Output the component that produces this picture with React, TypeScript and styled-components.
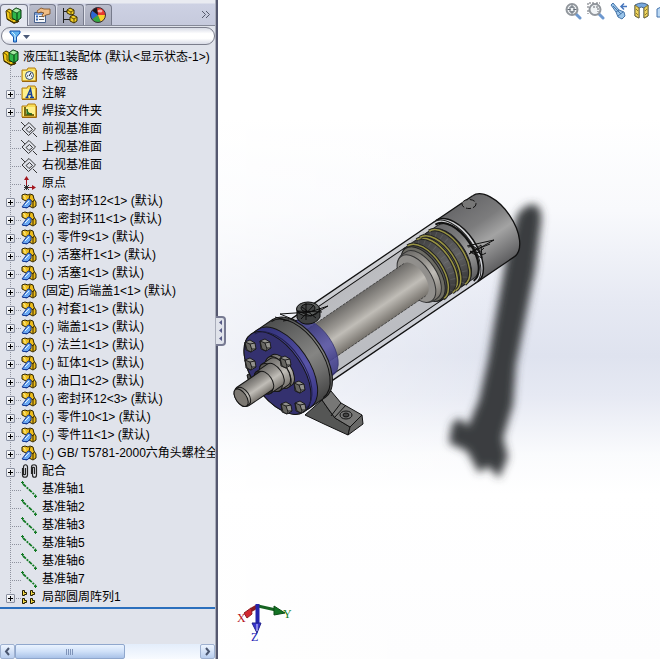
import React from 'react';
import styled, { createGlobalStyle } from 'styled-components';

const GlobalStyle = createGlobalStyle`
  * { box-sizing: border-box; }
  body { margin: 0; overflow: hidden; }
  button { font: inherit; padding: 0; border: 0; background: none; display: block; }
  svg { display: block; flex: none; }
`;

const Window = styled.div`
  display: flex;
  height: 100vh;
  background: #fff;
  color: #000;
  font: 12px/18px "Liberation Sans", "Noto Sans CJK SC", sans-serif;
`;

const Panel = styled.aside`
  position: relative;
  flex: 0 0 218px;
  min-width: 0;
  display: flex;
  flex-direction: column;
  background: #e0e3eb;
  border-right: 2px solid #55586f;
`;

const PanelBody = styled.div`
  flex: 1;
  min-width: 0;
  min-height: 0;
  display: flex;
  flex-direction: column;
  border-right: 1px solid #a9adba;
`;

const TabBar = styled.div`
  display: flex;
  align-items: stretch;
  height: 26px;
  padding: 4px 4px 0 0;
  flex: none;
  background: linear-gradient(#e9ebf1 0 3px, #cdd1e3 4px, #c6cadd);
  border-bottom: 1px solid #858998;
`;

const Tab = styled.button<{ $active?: boolean }>`
  width: 28px;
  height: ${p => (p.$active ? 22 : 21)}px;
  display: flex;
  align-items: center;
  justify-content: center;
  border: 1px solid #777b8c;
  border-left-color: ${p => (p.$active ? '#777b8c' : '#e2e4ee')};
  border-bottom: 0;
  border-radius: 4px 4px 0 0;
  background: ${p => (p.$active ? '#e3e6ef' : 'linear-gradient(#b9bccb, #a6aabb)')};
`;

const MoreTabs = styled.button`
  margin-left: auto;
  width: 10px;
`;

const FilterBar = styled.label`
  display: flex;
  align-items: center;
  height: 18px;
  margin: 1px 0 0 1px;
  padding-left: 7px;
  gap: 3px;
  flex: none;
  border: 1px solid #7b7e8c;
  border-radius: 9px;
  background: linear-gradient(#d8dbe6, #fff 35%, #fff 65%, #d9dce7);
`;

const FilterInput = styled.input`
  flex: 1;
  min-width: 0;
  height: 14px;
  border: 0;
  outline: 0;
  background: transparent;
  font: inherit;
`;

const Tree = styled.ul`
  list-style: none;
  margin: 0;
  padding: 3px 0 1px;
  flex: none;
  overflow: hidden;
  border-bottom: 2px solid #2b6fbd;
`;

const Row = styled.li<{ $root?: boolean }>`
  display: flex;
  align-items: center;
  height: 18px;
  padding-left: ${p => (p.$root ? 2 : 0)}px;
  gap: ${p => (p.$root ? 3 : 0)}px;
  white-space: pre;
`;

const Branch = styled.span<{ $last?: boolean }>`
  flex: none;
  width: 21px;
  height: 18px;
  display: flex;
  align-items: center;
  padding-left: 6px;
  background:
    repeating-linear-gradient(180deg, #8e929e 0 1px, transparent 1px 2px) 10px 0 / 1px ${p => (p.$last ? 10 : 18)}px no-repeat,
    repeating-linear-gradient(90deg, #8e929e 0 1px, transparent 1px 2px) 12px 10px / 9px 1px no-repeat;
`;

const Expander = styled.button`
  width: 9px;
  height: 9px;
  margin-top: 2px;
  border: 1px solid #8a90a0;
  border-radius: 1px;
  background:
    linear-gradient(#000, #000) 1px 3px / 5px 1px no-repeat,
    linear-gradient(#000, #000) 3px 1px / 1px 5px no-repeat,
    linear-gradient(135deg, #fff, #d6d9e0);
`;

const Label = styled.span`
  margin-left: 4px;
`;

const RootLabel = styled.span``;

const ScrollBar = styled.div`
  display: flex;
  height: 15px;
  margin-top: auto;
  flex: none;
  background: linear-gradient(#e3edfb, #f8fbff);
`;

const ScrollButton = styled.button`
  width: 15px;
  display: flex;
  align-items: center;
  justify-content: center;
  border: 1px solid #9fb1d0;
  border-radius: 2px;
  background: linear-gradient(#eef5ff, #b8cdee);
`;

const ScrollThumb = styled.div`
  width: 110px;
  margin-right: auto;
  border: 1px solid #8fa7cd;
  border-radius: 2px;
  background:
    repeating-linear-gradient(90deg, #7f93b8 0 1px, transparent 1px 2px) center / 8px 6px no-repeat,
    linear-gradient(#eaf3ff, #cfe0f8 50%, #a9c2e8);
`;

const Splitter = styled.button`
  position: absolute;
  z-index: 1;
  right: -10px;
  top: 316px;
  width: 10px;
  height: 30px;
  border: 2px solid #777a92;
  border-left: 0;
  border-radius: 0 4px 4px 0;
  background: #e0e3eb;
`;

const Viewport = styled.main`
  position: relative;
  flex: 1;
  min-width: 0;
  overflow: hidden;
  background:
    linear-gradient(90deg, rgba(255,255,255,.55), rgba(255,255,255,0) 70%),
    linear-gradient(#fff 18%, #f8f9fc 32%, #e6e9f3 46%, #dfe3ef 54%, #e6e9f3 60%, #fafbfd 69%, #fff 75%, #fdfdfe);
`;

const Scene = styled.svg`
  width: 100%;
  height: 100%;
`;

const ViewTools = styled.div`
  position: absolute;
  top: 2px;
  left: 346px;
  display: flex;
  gap: 5px;
`;

const ToolButton = styled.button`
  flex: none;
  width: 18px;
  height: 18px;
`;

const PartCube = () => (
  <svg width="18" height="17" viewBox="0 0 18 17">
    <path d="M1 4 4 2l4 2 1 4 4 3v4l-4 1-7-4z" fill="#f2c916" stroke="#3d3000" />
    <path d="M2 4l3 2v5l3 2 1-1" fill="none" stroke="#6d5400" />
    <path d="M7 4l4-3 5 2v8l-4 3-5-3z" fill="#2fb64a" stroke="#06350d" />
    <path d="M7 4l5 2 4-3-5-2z" fill="#a4eba2" stroke="#06350d" strokeWidth=".7" />
    <path d="M12 6v8" stroke="#06350d" />
    <path d="M2 12l7 4 5-2" stroke="#463400" strokeWidth="1.4" fill="none" />
  </svg>
);

const PropertyIcon = () => (
  <svg width="18" height="17" viewBox="0 0 18 17">
    <path d="M1.500 5.500h11v10h-11z" fill="#f5f7fb" stroke="#47618c" />
    <path d="M2 6h10v2H2z" fill="#7e9fd4" />
    <path d="M3 9.500h2M3 12.500h2" stroke="#3265b5" strokeWidth="2" />
    <path d="M6 9.500h5M6 12.500h5" stroke="#666" />
    <path d="M4 4l4-3 3 1h6v5l-4 1-3 2-1-2 2-2-3-1-3 1z" fill="#f0bd85" stroke="#7b4b1d" strokeWidth=".8" />
  </svg>
);

const ConfigIcon = () => (
  <svg width="18" height="17" viewBox="0 0 18 17">
    <path d="M2.500 1v15M2.500 4.500H7M2.500 12.500H9" stroke="#222" fill="none" />
    <path d="M6 3l3-2 4 2v4l-3 1-4-2zM9 10l3-2 4 2v4l-3 2-4-2z" fill="#f4cf26" stroke="#3d3000" />
    <path d="M6 3l4 2v3M9 10l4 2v4M10 5l3-2M13 12l3-2" stroke="#3d3000" fill="none" strokeWidth=".8" />
  </svg>
);

const BallIcon = () => (
  <svg width="18" height="18" viewBox="0 0 18 18">
    <circle cx="9" cy="9" r="7.500" fill="#e8382c" />
    <path d="M9 9 3 4.500A7.500 7.500 0 0 0 3 13.500z" fill="#2b67d1" />
    <path d="M9 9 3 13.500A7.500 7.500 0 0 0 12 16z" fill="#35a843" />
    <path d="M9 9l3 7a7.500 7.500 0 0 0 4.500-7z" fill="#f5d32b" />
    <path d="M9 9 8 1.500A7.500 7.500 0 0 0 3 4.500z" fill="#18181c" />
    <circle cx="9" cy="9" r="7.500" fill="none" stroke="#3a2e3a" />
    <ellipse cx="11" cy="5" rx="2.500" ry="1.500" fill="#fff" opacity=".6" />
  </svg>
);

const Folder = ({ children }: { children: React.ReactNode }) => (
  <svg width="17" height="16" viewBox="0 0 17 16">
    <path d="M1 3h5l1-2h7l1 2v11H1z" fill="#f7dc55" stroke="#b27c13" />
    <path d="M2 4h12v9H2z" fill="#fdf08b" />
    <path d="M15.500 3v11.500H1" stroke="#9a650d" fill="none" />
    {children}
  </svg>
);

const SensorIcon = () => (
  <Folder>
    <circle cx="8.500" cy="8.500" r="4" fill="#e8f1fb" stroke="#334a66" />
    <path d="M8 9l2-3M6 9h1M10 9h1" stroke="#111" />
  </Folder>
);

const NoteIcon = () => (
  <Folder>
    <path d="M4.500 12.500h3M9 12.500h4M6 12l3.500-8L11 12M7 9.500h4" stroke="#123f9b" strokeWidth="1.500" fill="none" />
  </Folder>
);

const WeldIcon = () => (
  <Folder>
    <path d="M4 4v8h9" stroke="#7a6a10" strokeWidth="2" fill="none" />
    <path d="M6 11V6c0 3 2 5 5 5z" fill="#37a642" stroke="#145d1c" />
  </Folder>
);

const PlaneIcon = () => (
  <svg width="17" height="17" viewBox="0 0 17 17" fill="none" stroke="#222">
    <path d="M8 1.500l6.500 6.500-7 6.500L1 8z" strokeWidth=".9" />
    <path d="M8.500 5.500l3 3-3.500 3-3-3zM0 1l4 4M12 12l4 4" strokeWidth=".9" />
  </svg>
);

const OriginIcon = () => (
  <svg width="17" height="17" viewBox="0 0 17 17">
    <path d="M5.500 12V3M6 12.500h7" stroke="#a3161e" fill="none" />
    <path d="M3 5l2.500-4L8 5zM11 10l4 2.500-4 2.500z" fill="#a3161e" />
    <path d="M3 10l5 5M8 10l-5 5M5.500 10v5M3 12.500h5" stroke="#222" strokeWidth=".9" />
  </svg>
);

const ComponentIcon = () => (
  <svg width="17" height="17" viewBox="0 0 17 17">
    <path d="M1 2l3-1 3 1 2-1 3 1 1 4 2 3v4l-3 2-4-2-1-4-6-3z" fill="#edbd1c" stroke="#2e2300" />
    <path d="M9 2l-1 4 4 3 1-2M12 9v5" stroke="#2e2300" fill="none" />
    <path d="M2 2.500l2 1v3" stroke="#fff4a1" fill="none" />
    <path d="M1 14L7 6l3 1v4l-4 4z" fill="#69a8f2" stroke="#173b96" />
    <path d="M2 14.500h5l3-3" stroke="#173b96" fill="none" />
    <path d="M4 12l4-4" stroke="#e2f1ff" />
  </svg>
);

const MateIcon = () => (
  <svg width="17" height="17" viewBox="0 0 17 17" fill="none">
    <path d="M1.500 5v7c0 3 5 3 5 0V4c0-3-4-3-4 0v7c0 1 2 1 2 0V5M10.500 11V4c0-3 5-3 5 0v8c0 3-4 3-4 0V5c0-1 2-1 2 0v6" stroke="#242424" strokeWidth="1.200" />
  </svg>
);

const AxisIcon = () => (
  <svg width="17" height="17" viewBox="0 0 17 17">
    <path d="M2 3l13 12" stroke="#137a25" strokeWidth="1.800" strokeDasharray="4 1 2 1" />
    <path d="M0 1.500h3M1.500 0v3M13 15.500h3M14.500 14v3" stroke="#137a25" />
  </svg>
);

const PatternIcon = () => (
  <svg width="17" height="17" viewBox="0 0 17 17">
    {[[1, 1], [9, 1], [1, 9], [9, 9]].map(([x, y]) => (
      <path key={`${x}${y}`} transform={`translate(${x} ${y})`} d="M.500.500h2v2h2v2h-2v1h-2z" fill="#f1d846" stroke="#231d00" />
    ))}
  </svg>
);

const icons = {
  sensor: SensorIcon, note: NoteIcon, weld: WeldIcon, plane: PlaneIcon, origin: OriginIcon,
  part: ComponentIcon, mate: MateIcon, axis: AxisIcon, pattern: PatternIcon,
};

type Node = [keyof typeof icons, string, boolean?];

const nodes: Node[] = [
  ['sensor', '传感器'],
  ['note', '注解', true],
  ['weld', '焊接文件夹', true],
  ['plane', '前视基准面'],
  ['plane', '上视基准面'],
  ['plane', '右视基准面'],
  ['origin', '原点'],
  ['part', '(-) 密封环12<1> (默认)', true],
  ['part', '(-) 密封环11<1> (默认)', true],
  ['part', '(-) 零件9<1> (默认)', true],
  ['part', '(-) 活塞杆1<1> (默认)', true],
  ['part', '(-) 活塞1<1> (默认)', true],
  ['part', '(固定) 后端盖1<1> (默认)', true],
  ['part', '(-) 衬套1<1> (默认)', true],
  ['part', '(-) 端盖1<1> (默认)', true],
  ['part', '(-) 法兰1<1> (默认)', true],
  ['part', '(-) 缸体1<1> (默认)', true],
  ['part', '(-) 油口1<2> (默认)', true],
  ['part', '(-) 密封环12<3> (默认)', true],
  ['part', '(-) 零件10<1> (默认)', true],
  ['part', '(-) 零件11<1> (默认)', true],
  ['part', '(-) GB/ T5781-2000六角头螺栓全螺', true],
  ['mate', '配合', true],
  ['axis', '基准轴1'],
  ['axis', '基准轴2'],
  ['axis', '基准轴3'],
  ['axis', '基准轴5'],
  ['axis', '基准轴6'],
  ['axis', '基准轴7'],
  ['pattern', '局部圆周阵列1', true],
];

/* Cylinders share one axis; s is the distance along it from the front flange. */
const RATIO = 0.53;
const side = (r: number, from: number, to: number, open = false) =>
  `M${-r} ${-from}V${-to}A${r} ${r * RATIO} 0 0 1 ${r} ${-to}V${-from}A${r} ${r * RATIO} 0 0 ${open ? 0 : 1} ${-r} ${-from}Z`;
const arc = (r: number, s: number) => `M${-r} ${-s}A${r} ${r * RATIO} 0 0 1 ${r} ${-s}`;

type CylinderProps = { r: number; from: number; to: number; fill: string; face?: string };
const Cylinder = ({ r, from, to, fill, face }: CylinderProps) => (
  <g stroke="#151515">
    <path d={side(r, from, to)} fill={fill} />
    {face && <ellipse cx="0" cy={-from} rx={r} ry={r * RATIO} fill={face} />}
  </g>
);

const bolts = [[250, 346], [265, 345], [250, 364], [285, 362], [299, 387], [286, 408], [300, 407]];

const Model = () => (
  <Scene viewBox="218 0 442 659" role="img" aria-label="液压缸1装配体">
    <defs>
      <filter id="soft" x="-30%" y="-10%" width="160%" height="120%"><feGaussianBlur stdDeviation="4" /></filter>
      <linearGradient id="steel"><stop offset="0" stopColor="#68686a" /><stop offset=".35" stopColor="#7c7c7d" /><stop offset=".6" stopColor="#a3a3a3" /><stop offset="1" stopColor="#5e5e60" /></linearGradient>
      <linearGradient id="rod"><stop offset="0" stopColor="#6d6b68" /><stop offset=".35" stopColor="#9a9792" /><stop offset=".58" stopColor="#c0bdb7" /><stop offset="1" stopColor="#77736d" /></linearGradient>
      <linearGradient id="dark"><stop offset="0" stopColor="#414141" /><stop offset=".55" stopColor="#626263" /><stop offset="1" stopColor="#363636" /></linearGradient>
      <linearGradient id="blue"><stop offset="0" stopColor="#303078" /><stop offset=".6" stopColor="#5854a8" /><stop offset="1" stopColor="#34317e" /></linearGradient>
      <linearGradient id="flange"><stop offset="0" stopColor="#4d4e4e" /><stop offset=".55" stopColor="#858583" /><stop offset=".75" stopColor="#6c6c6b" /><stop offset="1" stopColor="#444" /></linearGradient>
      <linearGradient id="glass"><stop offset="0" stopColor="#a6a7ab" /><stop offset=".5" stopColor="#bdbec1" /><stop offset="1" stopColor="#afb1b7" /></linearGradient>
    </defs>

    <path filter="url(#soft)" fill="#3b3c3f" d="M517 215Q526 202 536 205Q544 210 540 230L535 270L523 330L516 365L513 405L503 438L508 457L499 478L488 466L479 473L467 451L449 443L452 424L459 418L468 426L479 400L488 360L494 325L506 260Z" />

    <g transform="translate(277.500 373) rotate(55.800)">
      <path d={side(37, 30, 217)} fill="url(#glass)" fillOpacity=".5" />
      <path d={side(32, 35, 214)} fill="#9fa0a2" fillOpacity=".4" />
      <path d={side(37, 217, 261, true)} fill="url(#steel)" />
      <path d={side(32, 200, 216)} fill="url(#steel)" stroke="#222" />
      <path d={arc(34, 214)} fill="none" stroke="#111" strokeWidth="2" />
      <path d={side(32, 178, 207)} fill="url(#dark)" stroke="#222" />
      {[179, 190, 194, 205].map(s => (
        <g key={s} fill="none"><path d={arc(32, s)} stroke="#222" strokeWidth="3.500" /><path d={arc(32, s)} stroke="#989343" strokeWidth="1.500" /></g>
      ))}
      {[185, 199].map(s => <path key={s} d={arc(32, s)} fill="none" stroke="#858585" strokeWidth="5" strokeOpacity=".3" strokeDasharray="1 5" />)}
      <ellipse cx="0" cy="-176" rx="31" ry="16.500" fill="#6d6c64" stroke="#222" />
      <path d={side(28, 170, 174)} fill="url(#rod)" stroke="#333" />
      <ellipse cx="0" cy="-168" rx="27" ry="14.500" fill="#918f8c" stroke="#333" />
      <path d={side(19.500, 48, 166)} fill="url(#rod)" />
      <path d="M-19.500 -48V-166M19.500 -48V-166" stroke="#333" strokeWidth=".7" strokeDasharray="3 1" />
      <path d="M-37 -28V-261M37 -28V-261" stroke="#111" strokeWidth="1.300" />
      <path d="M-32 -32V-176M32 -32V-180" stroke="#111" />
      <path d={arc(37, 261)} fill="none" stroke="#111" strokeWidth="1.300" />
      <path d={arc(37, 217)} fill="none" stroke="#111" strokeWidth="1.500" />
      <path d={arc(37, 214)} fill="none" stroke="#222" />
      <path d={side(33, 25, 45)} fill="url(#blue)" fillOpacity=".85" stroke="#34346d" strokeWidth=".7" />
    </g>

    <ellipse cx="469" cy="204" rx="7" ry="4.500" fill="#777" stroke="#111" strokeDasharray="5 2" />
    <path d="M467 246l27-6-25 14 12-9 1 13-12-6 20-8M468 247q8-2 10 4t8 2M470 251q7 5 14-3" fill="none" stroke="#111" />

    <g stroke="#121212" strokeLinejoin="round">
      <path d="M247 375l8-4 8 8-5 9-9-5z" fill="#4b4b4b" />
      <path d="M305 415L322 400 329 410 335 418 350 427 348 435 324 424Z" fill="#555655" />
      <path d="M322 400L331 391 341 403 362 415 350 427 335 418 329 410Z" fill="#777776" />
      <path d="M350 427L362 415 363 424 348 435Z" fill="#686867" />
      <path d="M331 416l10-13M334 418l12-13" fill="none" />
      <ellipse cx="346" cy="415" rx="6" ry="4" fill="#777" />
      <ellipse cx="346" cy="415" rx="3" ry="2" fill="#444" />
    </g>

    <g transform="translate(277.500 373) rotate(55.800)">
      <Cylinder r={47} from={5} to={26} fill="url(#flange)" />
      <path d={arc(46, 24)} fill="none" stroke="#111" />
      <Cylinder r={47} from={0} to={8} fill="url(#blue)" face="#34316f" />
      <path d={arc(45, 3)} fill="none" stroke="#22204d" />
      <Cylinder r={18} from={1} to={5} fill="url(#rod)" face="#77736d" />
      <Cylinder r={16} from={-8} to={2} fill="url(#rod)" face="#5d5a56" />
      <Cylinder r={13} from={-17} to={-3} fill="url(#rod)" face="#34322f" />
      <Cylinder r={11} from={-42} to={-14} fill="url(#rod)" />
      <Cylinder r={10} from={-44} to={-41} fill="url(#rod)" face="#7c7872" />
    </g>

    {bolts.map(([x, y]) => (
      <g key={`${x}-${y}`} transform={`translate(${x} ${y})`} stroke="#151515" strokeWidth=".9">
        <path d="M-5-4l5-2 5 3 1 6-5 3-5-2z" fill="#92918c" />
        <path d="M-5-4l5 2 2 6-1 2-4-2z" fill="#666560" />
        <path d="M0-2l5-1M2 3l4 0" fill="none" />
      </g>
    ))}

    <g stroke="#0d0d0d">
      <path d="M297 309v9q4 7 12 6 8-1 11-7v-9z" fill="#3f4141" />
      <ellipse cx="308" cy="309" rx="11.500" ry="7" fill="#5c5f5e" />
      <ellipse cx="308" cy="308" rx="7" ry="4" fill="#444646" />
      <path d="M280 314l30-2 18-6-17 10-14-5 25 1M280 314l17 7M302 307l14 11M314 305l-13 14M306 303v17M275 317l10 3M283 321l6-1" fill="none" />
    </g>

    <g fontFamily="Liberation Serif" fontSize="12">
      <path d="M258 606l-7 4" stroke="#8c1d22" strokeWidth="4" />
      <path d="M244 613l7-5 1 6-5 4z" fill="#d32630" stroke="#8c1d22" />
      <path d="M258 606l18 4" stroke="#166322" strokeWidth="3" />
      <path d="M274 606l11 7-11 2z" fill="#137324" stroke="#0a4c15" />
      <path d="M257.500 604v20" stroke="#2424ad" strokeWidth="4" />
      <path d="M252 623h9l-4 10z" fill="#3935d0" stroke="#20208d" />
      <path d="M257 624v7" stroke="#d6d6ff" />
      <text x="237" y="622" fill="#b4141d">X</text>
      <text x="283" y="618" fill="#148020">Y</text>
      <text x="251" y="641" fill="#1b1bb5">Z</text>
    </g>
  </Scene>
);

const Lens = ({ area }: { area?: boolean }) => (
  <svg width="18" height="18" viewBox="0 0 18 18" fill="none">
    <path d="M11 11l5 5" stroke="#6d98cf" strokeWidth="3" strokeLinecap="round" />
    <circle cx="8" cy="7.500" r="5.500" fill="#f1f4f6" stroke="#92979d" strokeWidth="2" />
    {area
      ? <path d="M1 6V1h6M9 1h4M1 8v4M6 5h5v5" stroke="#666b72" strokeDasharray="2 1" />
      : <path d="M8 3v3M8 9v3M3.500 7.500h3M9.500 7.500h3M6 5h4v5H6z" stroke="#626b75" />}
  </svg>
);

const PreviousView = () => (
  <svg width="18" height="18" viewBox="0 0 18 18">
    <path d="M1 3l2-2 6 7 5 2 1 4-3 3-4-2-2-5z" fill="#9bc5ea" stroke="#4776aa" />
    <path d="M6 10l3-2M8 14l5-4M3 4l8 8" stroke="#4776aa" fill="none" />
    <path d="M17 4.500h-6m3-3l-3 3 3 3" stroke="#4877bd" strokeWidth="1.500" fill="none" />
  </svg>
);

const SectionView = () => (
  <svg width="18" height="18" viewBox="0 0 18 18">
    <path d="M2 3q7-4 13 0v11l-4 2V6q-3-2-5 0v10l-4-2z" fill="#78a8dd" stroke="#44648a" />
    <path d="M2 3l4 3v10l-4-2zM11 6l4-3v11l-4 2z" fill="#f1d65b" stroke="#786c36" />
    <path d="M3 7l2 2M3 11l2 2M12 9l2-2M12 13l2-2" stroke="#927d28" />
  </svg>
);

const CubeView = () => (
  <svg width="18" height="18" viewBox="0 0 18 18"><path d="M1 7l6-3h9v11H1z" fill="#bcd9f4" stroke="#4675ad" /></svg>
);

const Chevron = ({ d }: { d: string }) => (
  <svg width="9" height="9" viewBox="0 0 9 9"><path d={d} fill="none" stroke="#4a5670" strokeWidth="2" /></svg>
);

export default function App() {
  return (
    <Window>
      <GlobalStyle />
      <Panel>
        <PanelBody>
          <TabBar role="tablist">
            <Tab role="tab" $active aria-selected aria-label="设计树"><PartCube /></Tab>
            <Tab role="tab" aria-label="属性"><PropertyIcon /></Tab>
            <Tab role="tab" aria-label="配置"><ConfigIcon /></Tab>
            <Tab role="tab" aria-label="外观"><BallIcon /></Tab>
            <MoreTabs aria-label="更多">
              <svg width="10" height="9" viewBox="0 0 10 9"><path d="M1 1l3.500 3.500L1 8M5 1l3.500 3.500L5 8" stroke="#555a6c" fill="none" /></svg>
            </MoreTabs>
          </TabBar>
          <FilterBar>
            <svg width="21" height="13" viewBox="0 0 21 13">
              <path d="M1 1h10v2L7.500 7v5h-3V7L1 3z" fill="#62b3ee" stroke="#1553ad" />
              <path d="M3 2l3 3v5" stroke="#d2f1ff" fill="none" />
              <path d="M14 5h7l-3.500 4z" fill="#4b5a78" />
            </svg>
            <FilterInput aria-label="过滤" />
          </FilterBar>
          <Tree role="tree">
            <Row $root role="treeitem"><PartCube /><RootLabel>液压缸1装配体 (默认&lt;显示状态-1&gt;)</RootLabel></Row>
            {nodes.map(([kind, text, expandable], i) => {
              const Icon = icons[kind];
              return (
                <Row key={text} role="treeitem">
                  <Branch $last={i === nodes.length - 1}>{expandable && <Expander aria-label={`展开 ${text}`} />}</Branch>
                  <Icon />
                  <Label>{text}</Label>
                </Row>
              );
            })}
          </Tree>
          <ScrollBar>
            <ScrollButton aria-label="向左"><Chevron d="M6 1L3 4.500 6 8" /></ScrollButton>
            <ScrollThumb />
            <ScrollButton aria-label="向右"><Chevron d="M3 1l3 3.500L3 8" /></ScrollButton>
          </ScrollBar>
        </PanelBody>
        <Splitter aria-label="折叠面板">
          <svg width="8" height="26" viewBox="0 0 8 26"><path d="M6 2v5L3 4.500zM6 10v5l-3-2.500zM6 18v5l-3-2.500z" fill="#565a86" /></svg>
        </Splitter>
      </Panel>
      <Viewport>
        <Model />
        <ViewTools>
          <ToolButton aria-label="整屏显示"><Lens /></ToolButton>
          <ToolButton aria-label="局部放大"><Lens area /></ToolButton>
          <ToolButton aria-label="上一视图"><PreviousView /></ToolButton>
          <ToolButton aria-label="剖面视图"><SectionView /></ToolButton>
          <ToolButton aria-label="视图定向"><CubeView /></ToolButton>
        </ViewTools>
      </Viewport>
    </Window>
  );
}
